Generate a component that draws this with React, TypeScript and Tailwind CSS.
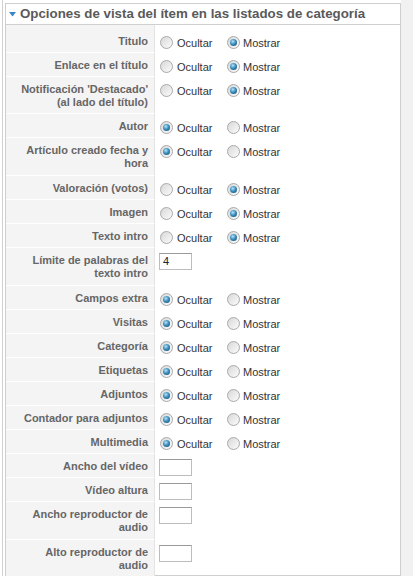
import React from 'react';

type Row = {
  label: string[];
  kind: 'radio' | 'text';
  value?: 'ocultar' | 'mostrar';
  text?: string;
  h: string;
};

const rows: Row[] = [
  { label: ['Titulo'], kind: 'radio', value: 'mostrar', h: 'h-[24px]' },
  { label: ['Enlace en el título'], kind: 'radio', value: 'mostrar', h: 'h-[24px]' },
  { label: ["Notificación 'Destacado'", '(al lado del título)'], kind: 'radio', value: 'mostrar', h: 'h-[37px]' },
  { label: ['Autor'], kind: 'radio', value: 'ocultar', h: 'h-[24px]' },
  { label: ['Artículo creado fecha y', 'hora'], kind: 'radio', value: 'ocultar', h: 'h-[38px]' },
  { label: ['Valoración (votos)'], kind: 'radio', value: 'mostrar', h: 'h-[24px]' },
  { label: ['Imagen'], kind: 'radio', value: 'mostrar', h: 'h-[24px]' },
  { label: ['Texto intro'], kind: 'radio', value: 'mostrar', h: 'h-[24px]' },
  { label: ['Límite de palabras del', 'texto intro'], kind: 'text', text: '4', h: 'h-[38px]' },
  { label: ['Campos extra'], kind: 'radio', value: 'ocultar', h: 'h-[24px]' },
  { label: ['Visitas'], kind: 'radio', value: 'ocultar', h: 'h-[24px]' },
  { label: ['Categoría'], kind: 'radio', value: 'ocultar', h: 'h-[24px]' },
  { label: ['Etiquetas'], kind: 'radio', value: 'ocultar', h: 'h-[24px]' },
  { label: ['Adjuntos'], kind: 'radio', value: 'ocultar', h: 'h-[24px]' },
  { label: ['Contador para adjuntos'], kind: 'radio', value: 'ocultar', h: 'h-[24px]' },
  { label: ['Multimedia'], kind: 'radio', value: 'ocultar', h: 'h-[24px]' },
  { label: ['Ancho del vídeo'], kind: 'text', text: '', h: 'h-[24px]' },
  { label: ['Vídeo altura'], kind: 'text', text: '', h: 'h-[24px]' },
  { label: ['Ancho reproductor de', 'audio'], kind: 'text', text: '', h: 'h-[38px]' },
  { label: ['Alto reproductor de', 'audio'], kind: 'text', text: '', h: 'h-[38px]' },
];

function Radio({ checked }: { checked: boolean }) {
  return (
    <span className="relative flex h-[13px] w-[13px] shrink-0 items-center justify-center rounded-full border border-[#a9a9a9] bg-[linear-gradient(135deg,#d8d8d8,#fbfbfb)]">
      {checked && (
        <span className="h-[7px] w-[7px] rounded-full bg-[radial-gradient(circle_at_40%_35%,#b8e4f8_0%,#3d8fbf_45%,#0f4466_100%)]" />
      )}
    </span>
  );
}

function Field({ row }: { row: Row }) {
  if (row.kind === 'text') {
    return (
      <div className="pl-[4px] pt-[5px]">
        <div className="flex h-[17px] w-[33px] items-center border border-[#bdbdbd] border-t-[#9a9a9a] bg-white pl-[3px] text-[11px] text-[#222]">
          {row.text}
        </div>
      </div>
    );
  }
  return (
    <div className="flex items-center pl-[5px] pt-[6px] text-[11px] leading-[13px] text-[#333]">
      <Radio checked={row.value === 'ocultar'} />
      <span className="ml-[4px] mt-[2px] w-[50px]">Ocultar</span>
      <Radio checked={row.value === 'mostrar'} />
      <span className="ml-[3px] mt-[2px]">Mostrar</span>
    </div>
  );
}

export default function App() {
  return (
    <div
      className="flex h-[576px] w-[416px] overflow-hidden bg-white"
      style={{ fontFamily: '"Liberation Sans", Arial, sans-serif' }}
    >
      <div className="ml-[2px] flex border-l border-[#d0d0d0] pl-[2px]">
        <div className="mt-[3px] w-[396px] border border-[#cfcfcf] bg-white">
          {/* header */}
          <div className="flex h-[21px] items-center border-b border-[#cfcfcf] pl-[3px]">
            <svg width="7" height="5" viewBox="0 0 7 5" className="mr-[4px] mt-[1px]">
              <polygon points="0,0 7,0 3.5,4.5" fill="#3b86c6" />
            </svg>
            <span className="text-[13.3px] font-bold leading-none text-[#5a5a5a]">
              Opciones de vista del ítem en las listados de categoría
            </span>
          </div>

          <div className="flex flex-col">
            {rows.map((row, i) => (
              <div key={i} className={`flex ${i === 0 ? 'h-[28px]' : row.h}`}>
                <div
                  className={`w-[149px] shrink-0 border-b border-r border-b-white border-r-[#e4e4e4] bg-[#f4f4f4] pr-[6px] text-right text-[11px] font-bold leading-[13px] text-[#666] ${
                    i === 0 ? 'pt-[10px]' : 'pt-[6px]'
                  }`}
                >
                  {row.label.map((l, j) => (
                    <div key={j}>{l}</div>
                  ))}
                </div>
                <div className={i === 0 ? 'pt-[4px]' : ''}>
                  <Field row={row} />
                </div>
              </div>
            ))}
          </div>
        </div>
      </div>
      <div className="ml-0 w-[12px] bg-[#f1f1f1]" />
    </div>
  );
}
